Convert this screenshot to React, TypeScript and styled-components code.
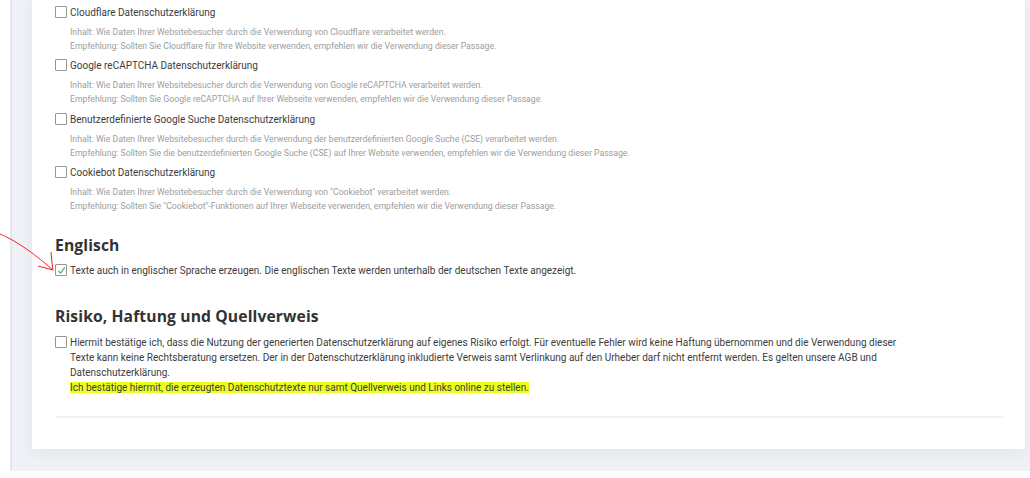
import styled, { createGlobalStyle } from 'styled-components';

const GlobalStyle = createGlobalStyle`
  html, body {
    margin: 0;
    padding: 0;
    background: #fff;
  }
  body {
    font-family: Roboto, "Liberation Sans", sans-serif;
  }
`;

const Page = styled.div`
  position: relative;
  width: 1030px;
  height: 478px;
  overflow: hidden;
  background: #fff;
`;

const Backdrop = styled.div`
  margin-left: 10px;
  height: 471px;
  background: #eff1f6;
  border-left: 2px solid #e4e6ec;
  box-sizing: border-box;
  padding: 0 5px 22px 20px;
`;

const Card = styled.div`
  background: #fff;
  height: 449px;
  box-sizing: border-box;
  padding: 0 21px 0 23px;
  box-shadow: 0 4px 14px rgba(30, 40, 80, 0.06);
  display: flex;
  flex-direction: column;
`;

const Option = styled.div`
  padding-top: 5px;
  height: 53.3px;
  box-sizing: border-box;
`;

const CheckRow = styled.label`
  display: flex;
  align-items: flex-start;
  gap: 3px;
  font-size: 10px;
  line-height: 15px;
  color: #3c3c3c;
`;

const Box = styled.span`
  flex: none;
  width: 10px;
  height: 10px;
  margin-top: 1px;
  border: 1px solid #959595;
  border-radius: 1px;
  background: #fff;
  display: flex;
  align-items: center;
  justify-content: center;
  color: #3cbf4e;
`;

const Hint = styled.div`
  margin: 5px 0 0 15px;
  font-size: 8.7px;
  line-height: 14px;
  color: #9d9d9d;
`;

const Heading = styled.h2<{ $top: number }>`
  margin: ${(p) => p.$top}px 0 0;
  font-family: "Open Sans", "DejaVu Sans", sans-serif;
  font-weight: 700;
  font-size: 15.7px;
  line-height: 22px;
  color: #333;
  letter-spacing: 0.1px;
`;

const Spaced = styled.div<{ $top: number }>`
  margin-top: ${(p) => p.$top}px;
`;

const Paragraph = styled.div`
  max-width: 835px;
`;

const Highlight = styled.span`
  background: #ebff1e;
`;

const Rule = styled.div`
  margin-top: 21px;
  height: 2px;
  background: #f3f3f3;
`;

const Arrow = styled.svg`
  position: absolute;
  left: 0;
  top: 228px;
  pointer-events: none;
`;

const Tick = () => (
  <svg width="9" height="9" viewBox="0 0 10 10">
    <path d="M1.5 5.5 L4 8 L8.5 1.5" fill="none" stroke="currentColor" strokeWidth="1.3" />
  </svg>
);

const options = [
  {
    title: 'Cloudflare Datenschutzerklärung',
    lines: [
      'Inhalt: Wie Daten Ihrer Websitebesucher durch die Verwendung von Cloudflare verarbeitet werden.',
      'Empfehlung: Sollten Sie Cloudflare für Ihre Website verwenden, empfehlen wir die Verwendung dieser Passage.',
    ],
  },
  {
    title: 'Google reCAPTCHA Datenschutzerklärung',
    lines: [
      'Inhalt: Wie Daten Ihrer Websitebesucher durch die Verwendung von Google reCAPTCHA verarbeitet werden.',
      'Empfehlung: Sollten Sie Google reCAPTCHA auf Ihrer Webseite verwenden, empfehlen wir die Verwendung dieser Passage.',
    ],
  },
  {
    title: 'Benutzerdefinierte Google Suche Datenschutzerklärung',
    lines: [
      'Inhalt: Wie Daten Ihrer Websitebesucher durch die Verwendung der benutzerdefinierten Google Suche (CSE) verarbeitet werden.',
      'Empfehlung: Sollten Sie die benutzerdefinierten Google Suche (CSE) auf Ihrer Website verwenden, empfehlen wir die Verwendung dieser Passage.',
    ],
  },
  {
    title: 'Cookiebot Datenschutzerklärung',
    lines: [
      'Inhalt: Wie Daten Ihrer Websitebesucher durch die Verwendung von "Cookiebot" verarbeitet werden.',
      'Empfehlung: Sollten Sie "Cookiebot"-Funktionen auf Ihrer Webseite verwenden, empfehlen wir die Verwendung dieser Passage.',
    ],
  },
];

function App() {
  return (
    <Page>
      <GlobalStyle />
      <Backdrop>
        <Card>
          {options.map((o) => (
            <Option key={o.title}>
              <CheckRow>
                <Box />
                {o.title}
              </CheckRow>
              <Hint>
                {o.lines.map((l) => (
                  <div key={l}>{l}</div>
                ))}
              </Hint>
            </Option>
          ))}

          <Heading $top={21}>Englisch</Heading>
          <Spaced $top={7}>
            <CheckRow>
              <Box>
                <Tick />
              </Box>
              Texte auch in englischer Sprache erzeugen. Die englischen Texte werden unterhalb der deutschen Texte angezeigt.
            </CheckRow>
          </Spaced>

          <Heading $top={27}>Risiko, Haftung und Quellverweis</Heading>
          <Spaced $top={8}>
            <CheckRow>
              <Box />
              <Paragraph>
                Hiermit bestätige ich, dass die Nutzung der generierten Datenschutzerklärung auf eigenes Risiko erfolgt. Für eventuelle Fehler wird keine Haftung übernommen und die Verwendung dieser
                Texte kann keine Rechtsberatung ersetzen. Der in der Datenschutzerklärung inkludierte Verweis samt Verlinkung auf den Urheber darf nicht entfernt werden. Es gelten unsere AGB und
                Datenschutzerklärung.
                <br />
                <Highlight>Ich bestätige hiermit, die erzeugten Datenschutztexte nur samt Quellverweis und Links online zu stellen.</Highlight>
              </Paragraph>
            </CheckRow>
          </Spaced>
          <Rule />
        </Card>
      </Backdrop>
      <Arrow width="70" height="50" viewBox="0 0 70 50">
        <path d="M0 6 C 14 12, 30 22, 53 42" fill="none" stroke="#e8262a" strokeWidth="1" />
        <path d="M51 24 C 51.5 30, 52 36, 53 42" fill="none" stroke="#e8262a" strokeWidth="1" />
        <path d="M38 38 L 53 42" fill="none" stroke="#e8262a" strokeWidth="1" />
      </Arrow>
    </Page>
  );
}

export default App;
